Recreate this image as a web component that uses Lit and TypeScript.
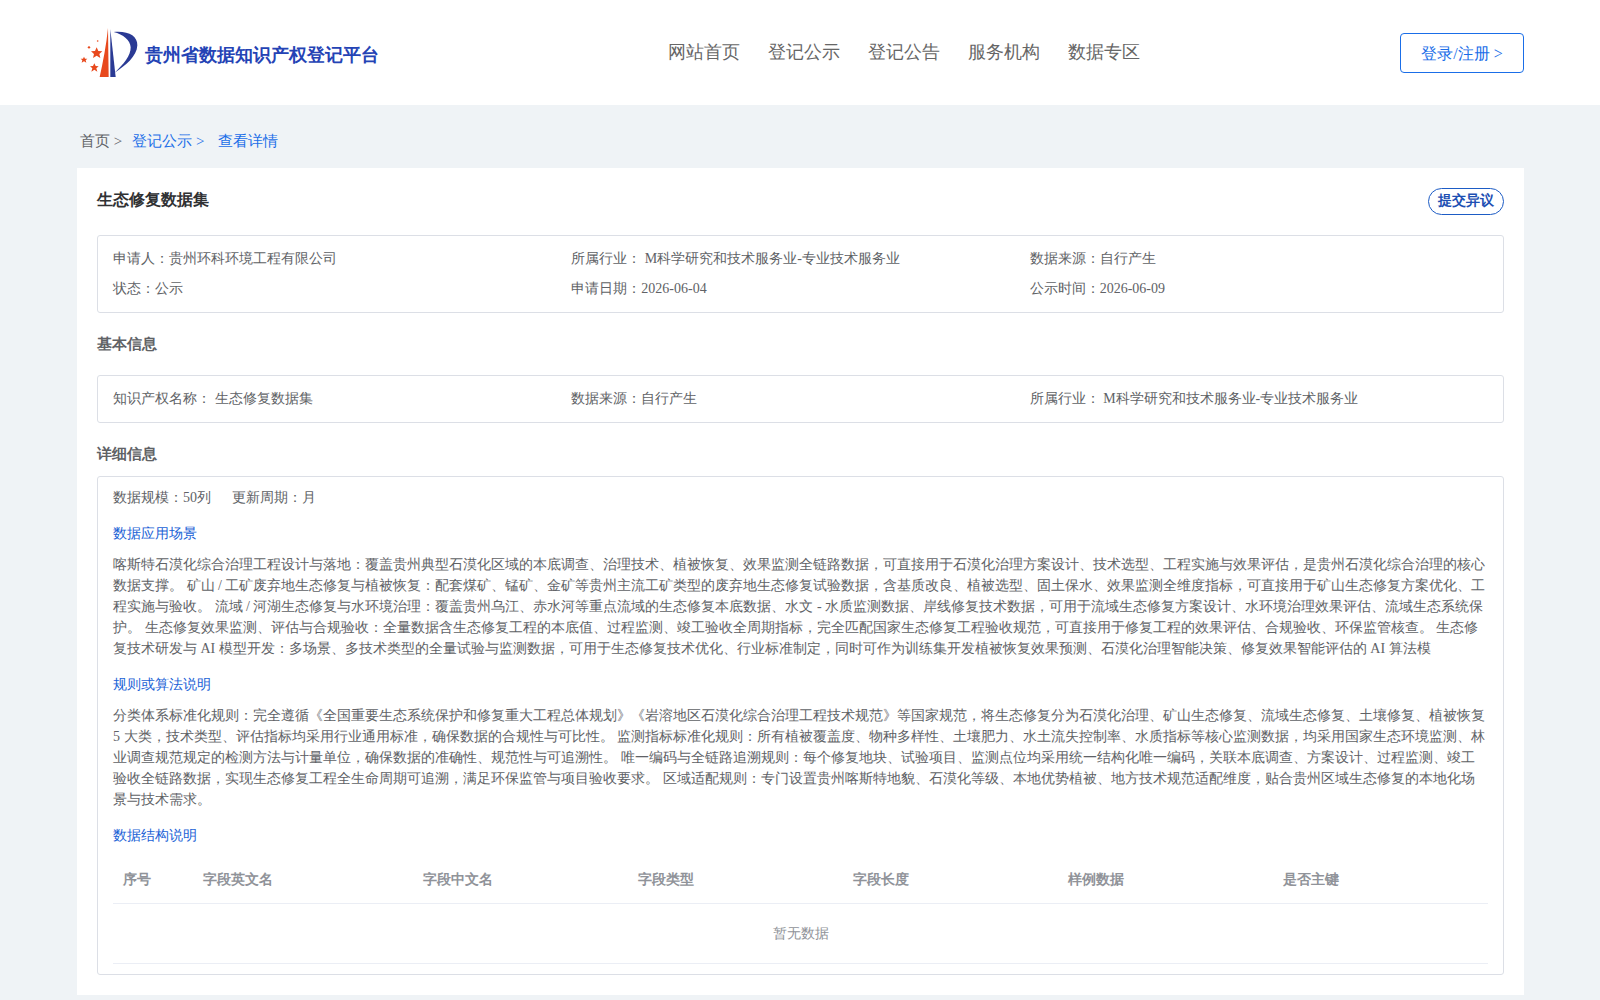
import { LitElement, html, css } from "lit";
import { customElement } from "lit/decorators.js";

const headers = ["序号", "字段英文名", "字段中文名", "字段类型", "字段长度", "样例数据", "是否主键"];

@customElement("app-root")
export class AppRoot extends LitElement {
  static styles = css`
    :host { display: block; min-height: 1000px; background: #eff3f6; color: #606266;
      font-family: "Liberation Serif", serif; font-size: 14px; }
    * { box-sizing: border-box; }
    .top { height: 105px; background: #fff; padding: 0 76px 0 80px; display: grid; grid-template-columns: 588px auto 1fr; align-items: start; }
    .brand { display: flex; align-items: flex-start; gap: 5px; padding-top: 28px; }
    .brand svg { display: block; width: 60px; height: 50px; }
    .brand b { font-size: 18px; line-height: 55px; color: #2443b5; }
    .nav { display: flex; gap: 28px; font-size: 18px; line-height: 24px; padding-top: 40px; color: #666; }
    .login { justify-self: end; margin-top: 33px; width: 124px; height: 40px; border: 1px solid #1a6ee8; border-radius: 4px; padding-top: 2px;
      color: #1a6ee8; font-size: 16px; display: flex; align-items: center; justify-content: center; background: #fff; }
    .crumb { height: 63px; padding: 9px 0 0 80px; display: flex; align-items: center; font-size: 15px; color: #606266; }
    .crumb .l { color: #1a6ee8; }
    .crumb .a { margin-left: 10px; }
    .crumb .b { margin-left: 14px; }
    .card { margin: 0 76px 0 77px; height: 827px; background: #fff; padding: 20px; }
    .head { display: flex; justify-content: space-between; align-items: flex-start; height: 47px; }
    .title { font-size: 16px; font-weight: bold; color: #303133; line-height: 24px; }
    .obj { width: 76px; height: 27px; border: 1px solid #1d5cc5; border-radius: 14px; color: #1d4fb3; font-weight: bold; font-size: 14px; padding-bottom: 2px;
      display: flex; align-items: center; justify-content: center; }
    .box { border: 1px solid #dcdfe6; border-radius: 3px; padding: 0 15px; }
    .info { display: grid; grid-template-columns: repeat(3, 1fr); padding-top: 8px; padding-bottom: 8px; line-height: 30px; }
    .sec { font-size: 15px; font-weight: bold; color: #606266; line-height: 24px; }
    .s1 { margin: 19px 0 19px; }
    .s2 { margin: 19px 0 10px; }
    .detail { height: 499px; padding-top: 10px; }
    .meta { display: flex; gap: 21px; line-height: 22px; }
    .link { color: #1a62d6; line-height: 21px; }
    p { margin: 0; line-height: 21px; }
    .detail .link { margin: 15px 0 10px; }
    .detail .meta + .link { margin-top: 14px; }
    .grid { display: grid; grid-template-columns: 80px 220px repeat(5, 215px); height: 47px; align-items: center; border-bottom: 1px solid #ebeef5;
      color: #909399; font-weight: bold; margin-top: 11px; }
    .grid span { padding-left: 10px; }
    .empty { height: 60px; border-bottom: 1px solid #ebeef5; color: #909399; display: flex; align-items: center; justify-content: center; }
  `;

  render() {
    return html`
      <div class="top">
        <div class="brand">
          <svg viewBox="15 18 180 150" aria-hidden="true">
            <path fill="#e8491d" d="M99 18 L101 165 L74 165 C84 120 94 70 99 18Z"/>
            <path fill="#2a3a94" d="M106 22 L122 165 L106 165Z"/>
            <path fill="#2a3a94" d="M116 30 C160 26 188 42 187 70 C186 104 150 132 119 152 C145 128 168 100 167 76 C166 54 145 38 116 30Z"/>
            <g fill="#e8491d">
              <polygon points="65,76 70,87 82,88 73,96 76,108 65,101 54,108 57,96 48,88 60,87"/>
              <polygon points="58,124 62,132 71,133 64,139 67,149 58,143 49,149 52,139 45,133 54,132"/>
              <polygon points="27,104 30,110 37,110 32,115 34,122 27,118 20,122 22,115 17,110 24,110"/>
              <circle cx="42" cy="76" r="3.5"/>
              <circle cx="68" cy="57" r="2.5"/>
            </g>
          </svg>
          <b>贵州省数据知识产权登记平台</b>
        </div>
        <div class="nav"><span>网站首页</span><span>登记公示</span><span>登记公告</span><span>服务机构</span><span>数据专区</span></div>
        <div class="login">登录/注册 &gt;</div>
      </div>
      <div class="crumb"><span>首页 &gt;</span><span class="l a">登记公示 &gt;</span><span class="l b">查看详情</span></div>
      <div class="card">
        <div class="head"><div class="title">生态修复数据集</div><div class="obj">提交异议</div></div>
        <div class="box info">
          <span>申请人：贵州环科环境工程有限公司</span><span>所属行业： M科学研究和技术服务业-专业技术服务业</span><span>数据来源：自行产生</span>
          <span>状态：公示</span><span>申请日期：2026-06-04</span><span>公示时间：2026-06-09</span>
        </div>
        <div class="sec s1">基本信息</div>
        <div class="box info">
          <span>知识产权名称： 生态修复数据集</span><span>数据来源：自行产生</span><span>所属行业： M科学研究和技术服务业-专业技术服务业</span>
        </div>
        <div class="sec s2">详细信息</div>
        <div class="box detail">
          <div class="meta"><span>数据规模：50列</span><span>更新周期：月</span></div>
          <div class="link">数据应用场景</div>
          <p>喀斯特石漠化综合治理工程设计与落地：覆盖贵州典型石漠化区域的本底调查、治理技术、植被恢复、效果监测全链路数据，可直接用于石漠化治理方案设计、技术选型、工程实施与效果评估，是贵州石漠化综合治理的核心数据支撑。 矿山 / 工矿废弃地生态修复与植被恢复：配套煤矿、锰矿、金矿等贵州主流工矿类型的废弃地生态修复试验数据，含基质改良、植被选型、固土保水、效果监测全维度指标，可直接用于矿山生态修复方案优化、工程实施与验收。 流域 / 河湖生态修复与水环境治理：覆盖贵州乌江、赤水河等重点流域的生态修复本底数据、水文 - 水质监测数据、岸线修复技术数据，可用于流域生态修复方案设计、水环境治理效果评估、流域生态系统保护。 生态修复效果监测、评估与合规验收：全量数据含生态修复工程的本底值、过程监测、竣工验收全周期指标，完全匹配国家生态修复工程验收规范，可直接用于修复工程的效果评估、合规验收、环保监管核查。 生态修复技术研发与 AI 模型开发：多场景、多技术类型的全量试验与监测数据，可用于生态修复技术优化、行业标准制定，同时可作为训练集开发植被恢复效果预测、石漠化治理智能决策、修复效果智能评估的 AI 算法模</p>
          <div class="link">规则或算法说明</div>
          <p>分类体系标准化规则：完全遵循《全国重要生态系统保护和修复重大工程总体规划》《岩溶地区石漠化综合治理工程技术规范》等国家规范，将生态修复分为石漠化治理、矿山生态修复、流域生态修复、土壤修复、植被恢复 5 大类，技术类型、评估指标均采用行业通用标准，确保数据的合规性与可比性。 监测指标标准化规则：所有植被覆盖度、物种多样性、土壤肥力、水土流失控制率、水质指标等核心监测数据，均采用国家生态环境监测、林业调查规范规定的检测方法与计量单位，确保数据的准确性、规范性与可追溯性。 唯一编码与全链路追溯规则：每个修复地块、试验项目、监测点位均采用统一结构化唯一编码，关联本底调查、方案设计、过程监测、竣工验收全链路数据，实现生态修复工程全生命周期可追溯，满足环保监管与项目验收要求。 区域适配规则：专门设置贵州喀斯特地貌、石漠化等级、本地优势植被、地方技术规范适配维度，贴合贵州区域生态修复的本地化场景与技术需求。</p>
          <div class="link">数据结构说明</div>
          <div class="grid">${headers.map((h) => html`<span>${h}</span>`)}</div>
          <div class="empty">暂无数据</div>
        </div>
      </div>
    `;
  }
}
